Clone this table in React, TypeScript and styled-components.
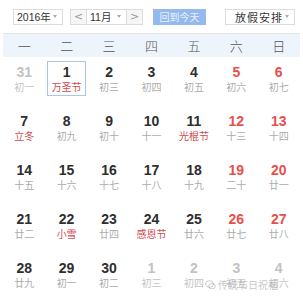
import React from 'react';
import styled, { createGlobalStyle } from 'styled-components';

const GlobalStyle = createGlobalStyle`
  body {
    margin: 0;
    background: #fff;
    font-family: Arial, "Liberation Sans", "Noto Sans CJK SC", sans-serif;
  }
`;

const Wrap = styled.div`
  position: relative;
  width: 303px;
  height: 300px;
  overflow: hidden;
  background: #fff;
`;

const Toolbar = styled.div`
  display: flex;
  align-items: center;
  height: 33px;
  padding: 0 0 0 13px;
  box-sizing: border-box;
`;

const Select = styled.div<{ $w: number; $ml?: number }>`
  display: flex;
  align-items: center;
  justify-content: space-between;
  width: ${(p) => p.$w}px;
  height: 16px;
  margin-left: ${(p) => p.$ml || 0}px;
  padding: 0 5px 0 3px;
  box-sizing: border-box;
  border: 1px solid #dcdcdc;
  background: #fff;
  font-size: 10.5px;
  color: #333;
  white-space: nowrap;
`;

const Caret = styled.span`
  flex: none;
  width: 0;
  height: 0;
  border-left: 2.5px solid transparent;
  border-right: 2.5px solid transparent;
  border-top: 3px solid #aaa;
`;

const MonthGroup = styled.div`
  display: flex;
  margin-left: 7px;
  height: 16px;
`;

const Arrow = styled.div`
  display: flex;
  align-items: center;
  justify-content: center;
  width: 17px;
  height: 16px;
  box-sizing: border-box;
  border: 1px solid #dcdcdc;
  background: #f6f6f6;
  color: #999;
  font-size: 11px;
  font-family: "DejaVu Sans", sans-serif;
`;

const MonthBox = styled(Select)`
  border-left: none;
  border-right: none;
`;

const TodayButton = styled.div`
  display: flex;
  align-items: center;
  justify-content: center;
  width: 53px;
  height: 16px;
  margin-left: 10px;
  background: #94b9ee;
  color: #e8f0fc;
  font-size: 10px;
  font-family: "Noto Sans CJK SC", sans-serif;
`;

const Cjk = styled.span<{ $spaced?: boolean }>`
  font-family: "Noto Sans CJK SC", sans-serif;
  font-size: ${(p) => (p.$spaced ? '11px' : '10.5px')};
  letter-spacing: ${(p) => (p.$spaced ? '1px' : '0')};
  margin-left: ${(p) => (p.$spaced ? '6px' : '0')};
`;

const WeekHeader = styled.div`
  display: grid;
  grid-template-columns: repeat(7, 1fr);
  margin: 0 3px;
  height: 24px;
  border-top: 1px solid #e4e4e4;
  box-sizing: border-box;
  background: #eef4fc;
  align-items: center;
`;

const WeekName = styled.div`
  text-align: center;
  font-family: "Noto Sans CJK SC", sans-serif;
  font-size: 13px;
  font-weight: 300;
  color: #555;
  line-height: 1;
`;

const Grid = styled.div`
  display: grid;
  grid-template-columns: repeat(7, 1fr);
  grid-auto-rows: 49px;
  margin: 0 3px;
`;

const Cell = styled.div`
  display: flex;
  justify-content: center;
`;

const Day = styled.div<{ $selected?: boolean }>`
  width: 39px;
  height: 35px;
  margin-top: 4px;
  padding-top: 1px;
  box-sizing: border-box;
  border: 1px solid ${(p) => (p.$selected ? '#a9c5ee' : 'transparent')};
  text-align: center;
`;

const Num = styled.div<{ $tone: 'normal' | 'weekend' | 'other' }>`
  font-size: 14px;
  font-weight: bold;
  line-height: 18px;
  color: ${(p) => (p.$tone === 'weekend' ? '#e5504c' : p.$tone === 'other' ? '#c2c2c2' : '#2e2e2e')};
`;

const Lunar = styled.div<{ $holiday?: boolean; $other?: boolean }>`
  font-family: "Noto Sans CJK SC", sans-serif;
  font-size: 10px;
  line-height: 12px;
  color: ${(p) => (p.$holiday ? '#cf4a50' : p.$other ? '#c4c4c4' : '#ababab')};
`;

const Watermark = styled.div`
  position: absolute;
  left: 205px;
  top: 279px;
  display: flex;
  align-items: center;
  gap: 2px;
  font-family: "Noto Sans CJK SC", sans-serif;
  font-size: 10px;
  line-height: 12px;
  color: rgba(150, 150, 150, 0.55);
`;

type D = { n: number; l: string; h?: boolean; o?: boolean; s?: boolean };

const weeks: D[][] = [
  [
    { n: 31, l: '初一', o: true },
    { n: 1, l: '万圣节', h: true, s: true },
    { n: 2, l: '初三' },
    { n: 3, l: '初四' },
    { n: 4, l: '初五' },
    { n: 5, l: '初六' },
    { n: 6, l: '初七' },
  ],
  [
    { n: 7, l: '立冬', h: true },
    { n: 8, l: '初九' },
    { n: 9, l: '初十' },
    { n: 10, l: '十一' },
    { n: 11, l: '光棍节', h: true },
    { n: 12, l: '十三' },
    { n: 13, l: '十四' },
  ],
  [
    { n: 14, l: '十五' },
    { n: 15, l: '十六' },
    { n: 16, l: '十七' },
    { n: 17, l: '十八' },
    { n: 18, l: '十九' },
    { n: 19, l: '二十' },
    { n: 20, l: '廿一' },
  ],
  [
    { n: 21, l: '廿二' },
    { n: 22, l: '小雪', h: true },
    { n: 23, l: '廿四' },
    { n: 24, l: '感恩节', h: true },
    { n: 25, l: '廿六' },
    { n: 26, l: '廿七' },
    { n: 27, l: '廿八' },
  ],
  [
    { n: 28, l: '廿九' },
    { n: 29, l: '初一' },
    { n: 30, l: '初二' },
    { n: 1, l: '初三', o: true },
    { n: 2, l: '初四', o: true },
    { n: 3, l: '初五', o: true },
    { n: 4, l: '初六', o: true },
  ],
];

const names = ['一', '二', '三', '四', '五', '六', '日'];

const App = () => (
  <Wrap>
    <GlobalStyle />
    <Toolbar>
      <Select $w={50}>
        <span>2016<Cjk>年</Cjk></span>
        <Caret />
      </Select>
      <MonthGroup>
        <Arrow>&lt;</Arrow>
        <MonthBox $w={39}>
          <span>11<Cjk>月</Cjk></span>
          <Caret />
        </MonthBox>
        <Arrow>&gt;</Arrow>
      </MonthGroup>
      <TodayButton>回到今天</TodayButton>
      <Select $w={70} $ml={19}>
        <Cjk $spaced>放假安排</Cjk>
        <Caret />
      </Select>
    </Toolbar>
    <WeekHeader>
      {names.map((n) => (
        <WeekName key={n}>{n}</WeekName>
      ))}
    </WeekHeader>
    <Grid>
      {weeks.map((w, wi) =>
        w.map((d, di) => (
          <Cell key={`${wi}-${di}`}>
            <Day $selected={d.s}>
              <Num $tone={d.o ? 'other' : di >= 5 ? 'weekend' : 'normal'}>{d.n}</Num>
              <Lunar $holiday={d.h} $other={d.o}>{d.l}</Lunar>
            </Day>
          </Cell>
        ))
      )}
    </Grid>
    <Watermark>
      <svg width="11" height="10" viewBox="0 0 11 10">
        <ellipse cx="4.5" cy="4" rx="4" ry="3.3" fill="none" stroke="rgba(150,150,150,0.6)" strokeWidth="0.8" />
        <ellipse cx="7" cy="6.2" rx="3.3" ry="2.7" fill="none" stroke="rgba(150,150,150,0.6)" strokeWidth="0.8" />
      </svg>
      <span>传统节日祝福</span>
    </Watermark>
  </Wrap>
);

export default App;
